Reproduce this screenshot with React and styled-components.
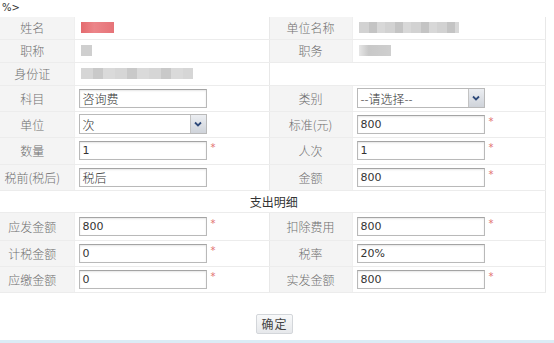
import React from "react";
import styled, { createGlobalStyle } from "styled-components";

const Global = createGlobalStyle`
  html, body { margin: 0; padding: 0; background: #fff; }
  body { font-family: "Noto Sans CJK SC", "DejaVu Sans", sans-serif; font-size: 12px; color: #333; }
`;

const Page = styled.div`
  width: 554px;
  height: 343px;
  display: flex;
  flex-direction: column;
  overflow: hidden;
`;

const Marker = styled.div`
  height: 17px;
  line-height: 16px;
  padding-left: 2px;
  font-family: "DejaVu Sans", sans-serif;
  font-size: 10px;
  color: #333;
`;

const Table = styled.table`
  width: 545px;
  border-collapse: collapse;
  table-layout: fixed;
  border-right: 1px solid #e6e6e6;
`;

const Row = styled.tr`
  height: ${(p) => p.$h}px;
  td { border-bottom: 1px solid #ececec; }
`;

const Label = styled.td`
  background: #f4f4f4;
  color: #6f6f6f;
  font-weight: 300;
  text-align: center;
  padding: 0 ${(p) => (p.$shift ? 9 : 0)}px 0 0;
  white-space: nowrap;
  border-right: 1px solid #efefef;
`;

const Value = styled.td`
  padding: 0 0 0 4px;
  border-right: 1px solid #e8e8e8;
`;

const Blank = styled.td``;

const Section = styled.td`
  text-align: center;
  color: #333;
  padding-left: 4px;
`;

const Field = styled.div`
  display: flex;
  align-items: center;
  gap: 4px;
`;

const Input = styled.div`
  box-sizing: border-box;
  width: 128px;
  height: 19px;
  border: 1px solid #b9b9b9;
  border-top-color: #a4a4a4;
  box-shadow: inset 0 1px 2px rgba(0, 0, 0, 0.1);
  background: #fff;
  display: flex;
  align-items: center;
  padding-left: 3px;
  font-family: ${(p) => (p.$latin ? '"DejaVu Sans", sans-serif' : '"Noto Sans CJK SC", sans-serif')};
  font-weight: ${(p) => (p.$latin ? 400 : 300)};
  font-size: ${(p) => (p.$latin ? 11 : 12)}px;
  color: #333;
`;

const Select = styled.div`
  box-sizing: border-box;
  width: 128px;
  height: 20px;
  border: 1px solid #b9b9b9;
  background: #fff;
  display: flex;
  align-items: stretch;
  font-size: 12px;
  font-weight: 300;
  color: #333;
`;

const SelectText = styled.span`
  flex: 1;
  padding-left: 3px;
  display: flex;
  align-items: center;
`;

const Arrow = styled.span`
  width: 15px;
  background: linear-gradient(#eceef2, #cfd3da);
  border-left: 1px solid #c3c3c3;
  display: flex;
  align-items: center;
  justify-content: center;
`;

const Star = styled.span`
  color: #e27272;
  font-size: 10px;
  align-self: flex-start;
  margin-top: 1px;
  font-family: "DejaVu Sans", sans-serif;
`;

const Redacted = styled.div`
  width: ${(p) => p.$w}px;
  height: 11px;
  margin-left: 2px;
  background: ${(p) => p.$bg};
  filter: blur(0.6px);
`;

const Footer = styled.div`
  display: flex;
  justify-content: center;
  padding-top: 21px;
  padding-right: 5px;
  flex: 1;
`;

const Button = styled.button`
  box-sizing: border-box;
  width: 37px;
  height: 20px;
  padding: 0;
  border: 1px solid #d3d6da;
  border-radius: 2px;
  background: linear-gradient(#f8f9fa, #e6e8eb);
  font-family: "Noto Sans CJK SC", sans-serif;
  font-size: 12px;
  color: #444;
  letter-spacing: 1px;
`;

const Band = styled.div`
  height: 3px;
  background: #dcecf6;
`;

const ArrowIcon = () => (
  <svg width="8" height="6" viewBox="0 0 8 6">
    <path d="M1 1.5 L4 4.5 L7 1.5" stroke="#2f4a7a" strokeWidth="1.8" fill="none" />
  </svg>
);

const TextInput = ({ v, star, latin }) => (
  <Field>
    <Input $latin={latin}>{v}</Input>
    {star && <Star>*</Star>}
  </Field>
);

const SelectBox = ({ v }) => (
  <Select>
    <SelectText>{v}</SelectText>
    <Arrow><ArrowIcon /></Arrow>
  </Select>
);

export default function App() {
  return (
    <Page>
      <Global />
      <Marker>%&gt;</Marker>
      <Table>
        <colgroup>
          <col style={{ width: 74 }} />
          <col style={{ width: 195 }} />
          <col style={{ width: 83 }} />
          <col style={{ width: 193 }} />
        </colgroup>
        <tbody>
          <Row $h={22}>
            <Label $shift>姓名</Label>
            <Value><Redacted $w={33} $bg="linear-gradient(90deg,#e46a6e,#ec8589 40%,#e67378)" /></Value>
            <Label>单位名称</Label>
            <Value><Redacted $w={100} $bg="repeating-linear-gradient(90deg,#d2d2d2 0 10px,#c4c4c4 10px 18px,#d8d8d8 18px 26px)" /></Value>
          </Row>
          <Row $h={23}>
            <Label $shift>职称</Label>
            <Value><Redacted $w={11} $bg="#cfcfcf" /></Value>
            <Label>职务</Label>
            <Value><Redacted $w={32} $bg="linear-gradient(90deg,#e6e6e6,#c8c8c8 30%,#cfcfcf)" /></Value>
          </Row>
          <Row $h={23}>
            <Label $shift>身份证</Label>
            <Value><Redacted $w={112} $bg="repeating-linear-gradient(90deg,#d6d6d6 0 12px,#c9c9c9 12px 22px,#dadada 22px 34px)" /></Value>
            <Blank colSpan={2} />
          </Row>
          <Row $h={26}>
            <Label $shift>科目</Label>
            <Value><TextInput v="咨询费" /></Value>
            <Label>类别</Label>
            <Value><SelectBox v="--请选择--" /></Value>
          </Row>
          <Row $h={26}>
            <Label $shift>单位</Label>
            <Value><SelectBox v="次" /></Value>
            <Label>标准(元)</Label>
            <Value><TextInput v="800" latin star /></Value>
          </Row>
          <Row $h={27}>
            <Label $shift>数量</Label>
            <Value><TextInput v="1" latin star /></Value>
            <Label>人次</Label>
            <Value><TextInput v="1" latin star /></Value>
          </Row>
          <Row $h={26}>
            <Label $shift>税前(税后)</Label>
            <Value><TextInput v="税后" /></Value>
            <Label>金额</Label>
            <Value><TextInput v="800" latin star /></Value>
          </Row>
          <Row $h={22}>
            <Section colSpan={4}>支出明细</Section>
          </Row>
          <Row $h={28}>
            <Label $shift>应发金额</Label>
            <Value><TextInput v="800" latin star /></Value>
            <Label>扣除费用</Label>
            <Value><TextInput v="800" latin star /></Value>
          </Row>
          <Row $h={26}>
            <Label $shift>计税金额</Label>
            <Value><TextInput v="0" latin star /></Value>
            <Label>税率</Label>
            <Value><TextInput v="20%" latin /></Value>
          </Row>
          <Row $h={26}>
            <Label $shift>应缴金额</Label>
            <Value><TextInput v="0" latin star /></Value>
            <Label>实发金额</Label>
            <Value><TextInput v="800" latin star /></Value>
          </Row>
        </tbody>
      </Table>
      <Footer>
        <Button>确定</Button>
      </Footer>
      <Band />
    </Page>
  );
}
